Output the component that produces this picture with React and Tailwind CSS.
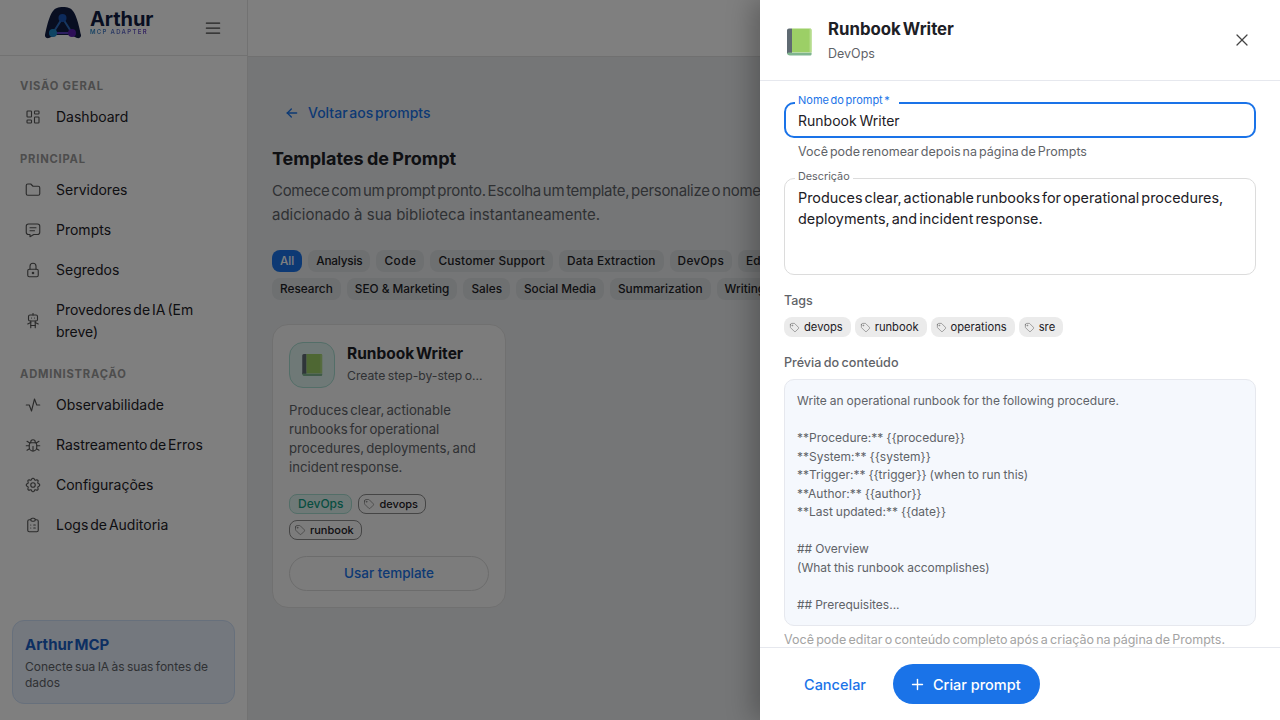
import {
  TbActivity,
  TbArrowLeft,
  TbBug,
  TbClipboardList,
  TbFolder,
  TbLayoutDashboard,
  TbLock,
  TbMenu2,
  TbMessage,
  TbPlus,
  TbRobot,
  TbSettings,
  TbTag,
  TbX,
} from "react-icons/tb";

const navSections = [
  { title: "VISÃO GERAL", items: [{ label: "Dashboard", icon: TbLayoutDashboard }] },
  {
    title: "PRINCIPAL",
    items: [
      { label: "Servidores", icon: TbFolder },
      { label: "Prompts", icon: TbMessage },
      { label: "Segredos", icon: TbLock },
      { label: "Provedores de IA (Em breve)", icon: TbRobot },
    ],
  },
  {
    title: "ADMINISTRAÇÃO",
    items: [
      { label: "Observabilidade", icon: TbActivity },
      { label: "Rastreamento de Erros", icon: TbBug },
      { label: "Configurações", icon: TbSettings },
      { label: "Logs de Auditoria", icon: TbClipboardList },
    ],
  },
];

const chipsTop = [
  { label: "Analysis", track: "tracking-[-0.2px]" },
  { label: "Code", track: "tracking-[0.5px]" },
  { label: "Customer Support", track: "tracking-[0.2px]" },
  { label: "Data Extraction", track: "tracking-[0.15px]" },
  { label: "DevOps", track: "tracking-[0.3px]" },
  { label: "Education", track: "" },
];
const chipsBottom = ["Research", "SEO & Marketing", "Sales", "Social Media", "Summarization", "Writing"];

const previewLines = [
  "Write an operational runbook for the following procedure.",
  "",
  "**Procedure:** {{procedure}}",
  "**System:** {{system}}",
  "**Trigger:** {{trigger}} (when to run this)",
  "**Author:** {{author}}",
  "**Last updated:** {{date}}",
  "",
  "## Overview",
  "(What this runbook accomplishes)",
  "",
  "## Prerequisites...",
];

function BookIcon({ size, className }) {
  return (
    <svg width={size} height={size} viewBox="0 0 32 32" className={className}>
      <path d="M9 2.500h18c1 0 1.600.7 1.600 1.600v22.400H9z" fill="#9ccf66" />
      <path d="M27.200 3v23.500" stroke="#c4e3a4" strokeWidth="0.9" />
      <path d="M4 27c0-1.600 1.200-2.600 2.600-2.600H9v2.300h19.600v1.200c0 .9-.7 1.600-1.600 1.600H7c-1.700 0-3-1-3-2.500z" fill="#7fb58f" />
      <path d="M6 2.500h3v24H6.200C5 26.500 4 27 4 28V4.500c0-1.100.9-2 2-2z" fill="#5f6a72" />
    </svg>
  );
}

function Logo() {
  return (
    <div className="flex items-center gap-[8px] pb-[10px]">
      <svg width="38" height="33" viewBox="0 0 38 33">
        <path
          d="M1 29C3 20 6 4 13 2c3-1.200 9-1.200 12 0 7 2 10 18 12 27 .5 2.500-2 3.500-4 3-3-1-5-3-7-3H12c-2 0-4 2-7 3-2 .5-4.500-.5-4-3z"
          fill="#101c42"
        />
        <path d="M18.500 12 9 27h19z" fill="none" stroke="#2f6fc0" strokeWidth="2" />
        <path d="M9 27h19" stroke="#5a3fc0" strokeWidth="2" />
        <circle cx="18.500" cy="12" r="4" fill="#1b56b8" />
        <circle cx="9" cy="27" r="4" fill="#1e88c7" />
        <circle cx="28" cy="27" r="4" fill="#5a1fb0" />
      </svg>
      <div className="flex flex-col">
        <span className="text-[20px] leading-[18px] font-bold tracking-[-0.1px] text-[#101c42]">Arthur</span>
        <span className="bg-gradient-to-r from-[#1e88c7] to-[#6a35c0] bg-clip-text text-[6px] leading-[8px] font-semibold tracking-[1.3px] text-transparent [word-spacing:0]">
          MCP ADAPTER
        </span>
      </div>
    </div>
  );
}

function Sidebar() {
  return (
    <aside className="flex w-[248px] shrink-0 flex-col border-r border-[#e4e4e4] bg-white">
      <div className="flex h-[56px] shrink-0 items-center justify-between border-b border-[#e4e4e4] pr-[24px] pl-[44px]">
        <Logo />
        <TbMenu2 size={20} strokeWidth={1.5} className="text-[#444]" />
      </div>
      <nav className="flex-1 pt-[22px]">
        {navSections.map((section) => (
          <div key={section.title} className="mb-[14px]">
            <div className="mb-[3px] px-[20px] text-[11.200px] leading-[16px] font-bold tracking-[0.8px] text-[#9a9a9a] [word-spacing:0]">
              {section.title}
            </div>
            {section.items.map((item) => {
              const Icon = item.icon;
              return (
                <div key={item.label} className="flex items-center gap-[14px] px-[24px] py-[9px]">
                  <Icon size={18} strokeWidth={1.5} className="shrink-0 text-[#555]" />
                  <span className="text-[14px] leading-[22px] text-[#1d2026]">{item.label}</span>
                </div>
              );
            })}
          </div>
        ))}
      </nav>
      <div className="mx-[12px] mb-[16px] rounded-[12px] border border-[#cfe0f8] bg-[#e8f0fd] px-[12px] pt-[14px] pb-[12px]">
        <div className="text-[15px] leading-[20px] font-bold text-[#1a5fc4]">Arthur MCP</div>
        <div className="mt-[4px] text-[12px] leading-[16px] text-[#5f6368] [word-spacing:-1px]">
          Conecte sua IA às suas fontes de dados
        </div>
      </div>
    </aside>
  );
}

function Chip({ children, active, track = "" }) {
  return (
    <span
      className={
        active
          ? "rounded-[8px] bg-[#1a73e8] px-[8px] text-[11.800px] leading-[22px] font-medium text-white"
          : `rounded-[8px] bg-[#dde0e2] px-[8px] text-[11.800px] leading-[22px] font-medium text-[#1d2026] [word-spacing:0] ${track}`
      }
    >
      {children}
    </span>
  );
}

function OutlineTag({ children }) {
  return (
    <span className="flex h-[20px] items-center gap-[4px] rounded-[8px] border border-[#8a8a8a] pr-[7px] pl-[4px] text-[11px] font-medium text-[#1d2026]">
      <TbTag size={12} strokeWidth={1.25} className="text-[#666]" />
      {children}
    </span>
  );
}

function TemplateCard() {
  return (
    <div className="w-[234px] rounded-[16px] border border-[#e0e0e0] bg-[#f8f8f8] px-[16px] pt-[17px] pb-[16px]">
      <div className="flex items-center gap-[12px]">
        <div className="flex h-[46px] w-[46px] shrink-0 items-center justify-center rounded-[14px] border border-[#a7dcd0] bg-[#dff2ee]">
          <BookIcon size={26} />
        </div>
        <div className="min-w-0 pb-[2px]">
          <div className="text-[15.500px] leading-[22px] font-bold text-[#1d2026]">Runbook Writer</div>
          <div className="mt-[2px] truncate text-[12.200px] leading-[18px] text-[#5f6368] [word-spacing:-1px]">
            Create step-by-step operational
          </div>
        </div>
      </div>
      <p className="mt-[13px] text-[13.200px] leading-[19px] text-[#5f6368] [word-spacing:-1.500px]">
        Produces clear, actionable runbooks for operational procedures, deployments, and incident response.
      </p>
      <div className="mt-[17px] flex flex-wrap gap-[6px]">
        <span className="flex h-[20px] items-center rounded-[8px] border border-[#a7dcd0] bg-[#dff2ee] px-[8px] text-[12px] font-medium text-[#0f9d84]">
          DevOps
        </span>
        <OutlineTag>devops</OutlineTag>
        <OutlineTag>runbook</OutlineTag>
      </div>
      <button className="mt-[16px] h-[35px] w-full rounded-full border border-[#d9d9d9] text-[13.500px] font-medium text-[#1a73e8]">
        Usar template
      </button>
    </div>
  );
}

function Main() {
  return (
    <main className="min-w-0 flex-1 bg-[#ebedef]">
      <div className="h-[57px] border-b border-[#e0e0e0] bg-white" />
      <div className="px-[24px] pt-[46px]">
        <div className="flex items-center gap-[8px] pl-[12px] text-[14px] leading-[20px] font-medium text-[#1a73e8]">
          <TbArrowLeft size={16} />
          Voltar aos prompts
        </div>
        <h1 className="mt-[21px] text-[18px] leading-[30px] font-bold text-[#1d2026] [word-spacing:-1px]">Templates de Prompt</h1>
        <p className="mt-[5px] whitespace-nowrap text-[15px] leading-[24px] text-[#5f6368]">
          <span className="tracking-[-0.3px]">Comece com um prompt pronto. Escolha um template, personalize o nome e ele será</span>
          <br />
          <span className="[word-spacing:0]">adicionado à sua biblioteca instantaneamente.</span>
        </p>
        <div className="mt-[23px] flex gap-[6px]">
          <Chip active>All</Chip>
          {chipsTop.map((c) => (
            <Chip key={c.label} track={c.track}>
              {c.label}
            </Chip>
          ))}
        </div>
        <div className="mt-[6px] flex gap-[6px]">
          {chipsBottom.map((c) => (
            <Chip key={c}>{c}</Chip>
          ))}
        </div>
        <div className="mt-[24px]">
          <TemplateCard />
        </div>
      </div>
    </main>
  );
}

function FilledTag({ children }) {
  return (
    <span className="flex h-[20px] items-center gap-[4px] rounded-[8px] bg-[#ebebeb] pt-[1px] pr-[8px] pl-[5px] text-[11.200px] text-[#1d2026]">
      <TbTag size={11} strokeWidth={1.25} className="text-[#666]" />
      {children}
    </span>
  );
}

function Drawer() {
  return (
    <div className="absolute top-0 right-0 bottom-0 flex w-[520px] flex-col bg-white shadow-[-8px_0_24px_rgba(0,0,0,0.25)]">
      <div className="flex h-[81px] shrink-0 items-center border-b border-[#e6e8ee] pr-[28px] pl-[23px]">
        <BookIcon size={32} className="mt-[3px] shrink-0" />
        <div className="ml-[13px] flex-1 pb-[2px]">
          <div className="text-[16.800px] leading-[28px] font-bold text-[#1d2026]">Runbook Writer</div>
          <div className="mt-[1px] text-[12.500px] leading-[20px] text-[#5f6368]">DevOps</div>
        </div>
        <TbX size={20} strokeWidth={1.5} className="text-[#444]" />
      </div>

      <div className="flex-1 overflow-hidden px-[24px] pt-[21px]">
        <div className="relative h-[36px] rounded-[10px] border-2 border-[#1a73e8] px-[12px] text-[14px] leading-[34px] text-[#1d2026] [word-spacing:-1px]">
          Runbook Writer
          <span className="absolute top-[-11px] left-[9px] bg-white pr-[9px] pl-[3px] text-[11px] leading-[14px] text-[#1a73e8] [word-spacing:-1.500px]">
            Nome do prompt *
          </span>
        </div>
        <div className="mt-[5px] px-[14px] text-[12.500px] leading-[18px] text-[#5f6368] [word-spacing:-1.500px]">
          Você pode renomear depois na página de Prompts
        </div>

        <div className="relative mt-[17px] h-[97px] rounded-[10px] border border-[#dcdcdc] px-[13px] pt-[8px] text-[14.400px] leading-[21px] text-[#1d2026]">
          Produces clear, actionable runbooks for operational procedures, deployments, and incident response.
          <span className="absolute top-[-9px] left-[10px] bg-white px-[3px] text-[10.800px] leading-[14px] text-[#5f6368]">Descrição</span>
        </div>

        <div className="mt-[17px] text-[12.500px] leading-[18px] font-medium text-[#5f6368]">Tags</div>
        <div className="mt-[7px] flex gap-[4px]">
          <FilledTag>devops</FilledTag>
          <FilledTag>runbook</FilledTag>
          <FilledTag>operations</FilledTag>
          <FilledTag>sre</FilledTag>
        </div>

        <div className="mt-[17px] text-[12.600px] leading-[18px] font-medium text-[#5f6368] [word-spacing:-1px]">Prévia do conteúdo</div>
        <div className="mt-[7px] h-[247px] overflow-hidden rounded-[10px] border border-[#e6e8ee] bg-[#f5f8fd] px-[12px] pt-[12px] text-[12px] leading-[18.500px] text-[#5f6368] [word-spacing:-0.400px]">
          {previewLines.map((line, i) => (
            <div key={i} className="h-[18.500px]">
              {line}
            </div>
          ))}
        </div>
        <div className="mt-[5px] text-[12.500px] leading-[18px] text-[#a3a3a3] [word-spacing:-1.250px]">
          Você pode editar o conteúdo completo após a criação na página de Prompts.
        </div>
      </div>

      <div className="flex h-[73px] shrink-0 items-center gap-[27px] border-t border-[#e6e8ee] pl-[44px]">
        <span className="pt-[2px] text-[14.500px] font-medium text-[#1a73e8]">Cancelar</span>
        <button className="flex h-[40px] w-[147px] items-center gap-[7px] rounded-full bg-[#1a73e8] pt-[1px] pl-[16px] text-[14.500px] font-medium text-white">
          <TbPlus size={17} />
          Criar prompt
        </button>
      </div>
    </div>
  );
}

export default function App() {
  return (
    <div className="relative flex h-[720px] w-[1280px] overflow-hidden font-['Inter',sans-serif] [word-spacing:-2px]">
      <Sidebar />
      <Main />
      <div className="absolute inset-0 bg-black/50" />
      <Drawer />
    </div>
  );
}
